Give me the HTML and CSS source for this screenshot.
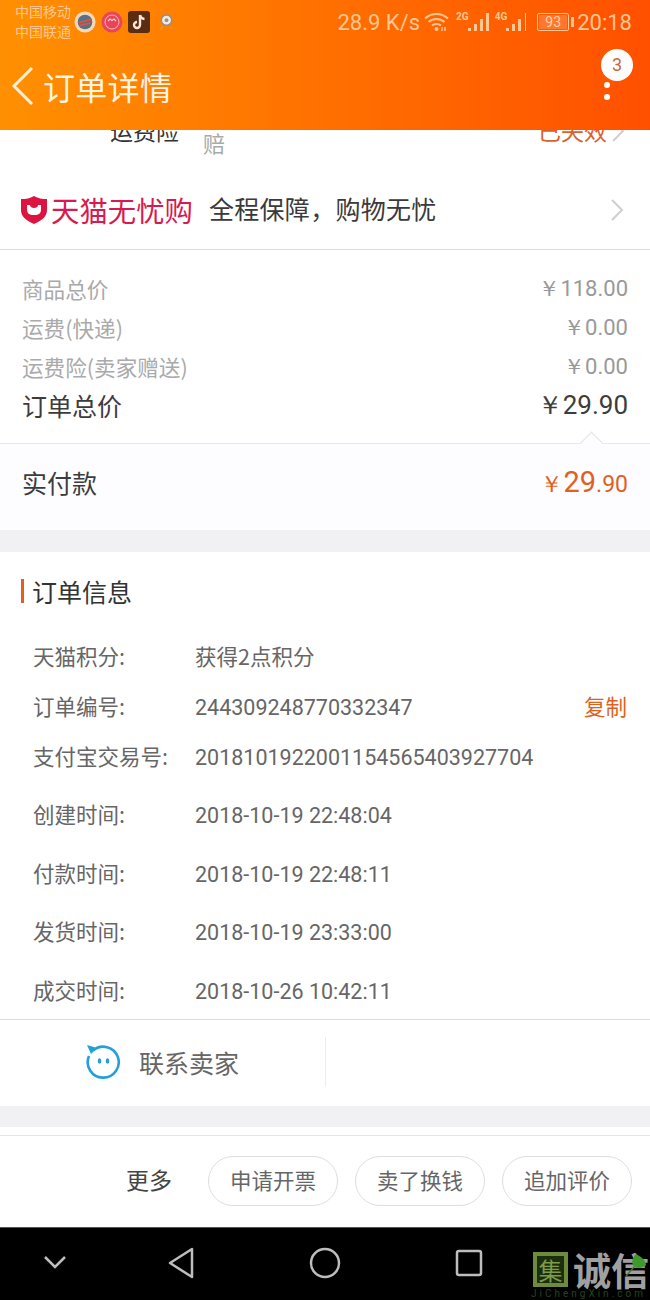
FILE: index.html
```html
<!DOCTYPE html>
<html>
<head>
    <title>订单详情</title>
    <link rel="stylesheet" href="styles.css">
</head>
<body>
<div class="phone">
    <div class="top">
        <div class="status">
            <div class="carrier"><span>中国移动</span><span>中国联通</span></div>
            <div class="apps">
                <svg class="app" width="22" height="22" viewBox="0 0 24 24"><circle cx="12" cy="12" r="11.500" fill="#f3d9b8"/><circle cx="12" cy="12" r="8" fill="#5b6f86"/><path d="M5 13l14-4M6 16l12-3" stroke="#d9553f" stroke-width="2"/></svg>
                <svg class="app" width="22" height="22" viewBox="0 0 22 22"><circle cx="11" cy="11" r="10.500" fill="#e8455a"/><circle cx="11" cy="11" r="7" fill="none" stroke="#f9b7b0" stroke-width="1"/><path d="M7 10l2-2 2 1.500 2-1.500 2 2" fill="none" stroke="#fbd3c8" stroke-width="1.200"/></svg>
                <svg class="app" width="22" height="22" viewBox="0 0 22 22"><rect width="22" height="22" rx="3" fill="#5a2c12"/><path d="M12 4v10a3 3 0 1 1-3-3M12 4c.5 2.500 2 3.800 4.500 4" fill="none" stroke="#fbe6d8" stroke-width="2.400"/></svg>
                <svg class="app app-last" width="15" height="20" viewBox="0 0 16 20"><circle cx="8" cy="8" r="5.500" fill="#f8e8d8" stroke="#8a8f96" stroke-width="1.500"/><circle cx="8" cy="8" r="2" fill="#7d97ad"/><path d="M4 15l-2 3M12 15l2 3" stroke="#c9a27a" stroke-width="1.200"/></svg>
            </div>
            <div class="status-right">
                <span class="speed">28.9 K/s</span>
                <svg class="wifi" width="25" height="20" viewBox="0 0 25 20"><g fill="none" stroke="#ffc792" stroke-width="2"><path d="M1 6.500c6.500-6 16.500-6 23 0"/><path d="M4.500 10c4.500-4 11.500-4 16 0"/><path d="M8 13.500c2.500-2 6.500-2 9 0"/></g><circle cx="12.500" cy="17" r="2" fill="#ffc792"/><path d="M18 15v4M21 15v4" stroke="#ffc792" stroke-width="1.500"/></svg>
                <span class="signal"><i class="net">2G</i>
                    <svg width="22" height="20" viewBox="0 0 22 20" fill="#ffc792"><rect x="0" y="16" width="3" height="3"/><rect x="6" y="12" width="3" height="7"/><rect x="12" y="7" width="3" height="12"/><rect x="18" y="1" width="3" height="18"/></svg>
                </span>
                <span class="signal"><i class="net">4G</i>
                    <svg width="22" height="20" viewBox="0 0 22 20" fill="#ffc792"><rect x="0" y="16" width="3" height="3"/><rect x="6" y="12" width="3" height="7"/><rect x="12" y="7" width="3" height="12"/><rect x="19" y="1" width="1" height="18"/></svg>
                </span>
                <span class="battery"><span class="battery-level">93</span></span><span class="battery-cap"></span>
                <span class="clock">20:18</span>
            </div>
        </div>
        <div class="titlebar">
            <svg class="back" width="24" height="40" viewBox="0 0 24 40"><path d="M21 2L3 20l18 18" fill="none" stroke="#ffeeda" stroke-width="3"/></svg>
            <span class="title">订单详情</span>
            <div class="more">
                <span class="badge">3</span>
                <span class="dot"></span>
                <span class="dot"></span>
            </div>
        </div>
    </div>

    <div class="content">
        <div class="cut-row">
            <span class="cut-name">运费险</span>
            <span class="cut-note">赔</span>
            <span class="cut-state">已失效</span>
            <svg class="chevron" width="14" height="22" viewBox="0 0 14 22"><path d="M2 1l10 10L2 21" fill="none" stroke="#cfcfcf" stroke-width="2"/></svg>
        </div>
        <div class="promise">
            <svg class="shield" width="26" height="28" viewBox="0 0 26 28"><path d="M13 0c4 2.500 8 3 13 3v11c0 7-6 11-13 14C6 25 0 21 0 14V3c5 0 9-.5 13-3z" fill="#dc143f"/><path d="M6 9h14v5a5 5 0 0 1-5 5h-4a5 5 0 0 1-5-5z" fill="#fff"/><path d="M9 9c0 4 8 4 8 0z" fill="#dc143f"/></svg>
            <span class="promise-name">天猫无忧购</span>
            <span class="promise-text">全程保障，购物无忧</span>
            <svg class="chevron" width="14" height="22" viewBox="0 0 14 22"><path d="M2 1l10 10L2 21" fill="none" stroke="#cfcfcf" stroke-width="2"/></svg>
        </div>

        <div class="fees">
            <div class="fee"><span>商品总价</span><span class="price"><i>￥</i>118.00</span></div>
            <div class="fee"><span>运费(快递)</span><span class="price"><i>￥</i>0.00</span></div>
            <div class="fee"><span>运费险(卖家赠送)</span><span class="price"><i>￥</i>0.00</span></div>
            <div class="fee fee-total"><span>订单总价</span><span class="price"><i>￥</i>29.90</span></div>
        </div>

        <div class="paid">
            <span class="arrow"></span>
            <span>实付款</span>
            <span class="paid-price"><i>￥</i><b>29</b>.90</span>
        </div>

        <div class="gap"></div>

        <div class="info">
            <div class="info-title">订单信息</div>
            <div class="info-row"><span class="key">天猫积分:</span><span class="cn">获得2点积分</span></div>
            <div class="info-row"><span class="key">订单编号:</span><span>244309248770332347</span><span class="copy">复制</span></div>
            <div class="info-row"><span class="key">支付宝交易号:</span><span>2018101922001154565403927704</span></div>
            <div class="dates">
                <div class="info-row tall"><span class="key">创建时间:</span><span>2018-10-19 22:48:04</span></div>
                <div class="info-row tall"><span class="key">付款时间:</span><span>2018-10-19 22:48:11</span></div>
                <div class="info-row tall"><span class="key">发货时间:</span><span>2018-10-19 23:33:00</span></div>
                <div class="info-row tall"><span class="key">成交时间:</span><span>2018-10-26 10:42:11</span></div>
            </div>
        </div>

        <div class="contact">
            <div class="contact-seller">
                <svg width="36" height="36" viewBox="0 0 36 36"><path d="M8 6.500A15.500 15.500 0 1 1 4 12" fill="none" stroke="#22a0dc" stroke-width="2.600"/><path d="M2 1l10 3-6 6z" fill="#22a0dc"/><ellipse cx="14.500" cy="17" rx="1.800" ry="2.800" fill="#22a0dc"/><ellipse cx="22.500" cy="17" rx="1.800" ry="2.800" fill="#22a0dc"/></svg>
                <span>联系卖家</span>
            </div>
            <div class="contact-empty"></div>
        </div>

        <div class="gap gap-small"></div>
        <div class="spacer"></div>

        <div class="actions">
            <span class="actions-more">更多</span>
            <span class="pill">申请开票</span>
            <span class="pill">卖了换钱</span>
            <span class="pill">追加评价</span>
        </div>
    </div>

    <div class="nav">
        <div class="nav-btn nav-first">
            <svg width="26" height="18" viewBox="0 0 26 18"><path d="M3 3l10 10L23 3" fill="none" stroke="#bdbdbd" stroke-width="2.500"/></svg>
        </div>
        <div class="nav-btn">
            <svg width="28" height="32" viewBox="0 0 28 32"><path d="M25 2v28L3 16z" fill="none" stroke="#bdbdbd" stroke-width="2.500" stroke-linejoin="round"/></svg>
        </div>
        <div class="nav-btn">
            <svg width="32" height="32" viewBox="0 0 32 32"><circle cx="16" cy="16" r="14" fill="none" stroke="#bdbdbd" stroke-width="2.500"/></svg>
        </div>
        <div class="nav-btn">
            <svg width="28" height="28" viewBox="0 0 28 28"><rect x="2" y="2" width="24" height="24" rx="2" fill="none" stroke="#bdbdbd" stroke-width="2.500"/></svg>
        </div>
        <div class="watermark">
            <div class="wm-main">
                <span class="wm-box">集</span>
                <span class="wm-name">诚信</span>
            </div>
            <span class="wm-url">JiChengXin.com</span>
            <svg class="wm-leaf" width="22" height="28" viewBox="0 0 22 28"><path d="M11 2c6 3 10 7 10 11-3 3-8 4-12 2C6 11 7 6 11 2z" fill="#3f9a2e"/><path d="M9 15L1 24" stroke="#3f7a2e" stroke-width="1.500"/></svg>
        </div>
    </div>
</div>
</body>
</html>
```

FILE: styles.css
```css
* {
    box-sizing: border-box;
}

body {
    margin: 0;
    background-color: #fff;
    font-family: "Noto Sans CJK SC", sans-serif;
    color: #333;
}

i {
    font-style: normal;
}

.phone {
    width: 650px;
    height: 1300px;
    display: flex;
    flex-direction: column;
    overflow: hidden;
}

/* header */

.top {
    height: 130px;
    flex: none;
    background: linear-gradient(90deg, #ff9000, #ff5000);
}

.status {
    height: 44px;
    display: flex;
    align-items: center;
    padding: 0 18px 0 15px;
    color: #ffc792;
}

.carrier {
    display: flex;
    flex-direction: column;
    font-size: 14px;
    line-height: 20px;
    margin-top: -2px;
}

.apps {
    display: flex;
    align-items: center;
    gap: 5px;
    margin-left: 3px;
}

.app-last {
    margin-left: 4px;
}

.status-right {
    margin-left: auto;
    display: flex;
    align-items: center;
    font-family: Roboto, sans-serif;
}

.speed {
    font-size: 22px;
    margin-right: 4px;
}

.wifi {
    margin-right: 7px;
}

.signal {
    display: flex;
    align-items: flex-end;
    margin-right: 5px;
}

.net {
    font-size: 10px;
    line-height: 10px;
    font-weight: bold;
    align-self: flex-start;
    margin-right: -1px;
}

.battery {
    width: 32px;
    height: 18px;
    margin-left: 4px;
    border: 1px solid #ffc792;
    border-radius: 2px;
    padding: 1px;
    display: flex;
}

.battery-level {
    flex: 1;
    background-color: rgba(255, 255, 255, 0.18);
    color: #ffd2a6;
    font-size: 14px;
    line-height: 14px;
    text-align: center;
}

.battery-cap {
    width: 3px;
    height: 10px;
    margin-left: 2px;
    background-color: #ffc792;
}

.clock {
    font-size: 22px;
    margin-left: 3px;
}

.titlebar {
    height: 86px;
    display: flex;
    align-items: center;
    padding: 0 0 2px 11px;
    position: relative;
}

.title {
    margin-left: 8px;
    font-size: 32px;
    letter-spacing: 0.300px;
    color: #fff3e4;
}

.more {
    margin-left: auto;
    margin-right: 40px;
    margin-top: 9px;
    display: flex;
    flex-direction: column;
    align-items: center;
    gap: 6px;
}

.dot {
    width: 6px;
    height: 6px;
    border-radius: 50%;
    background-color: #fff;
}

.badge {
    position: absolute;
    top: 5px;
    right: 17px;
    width: 32px;
    height: 32px;
    border-radius: 50%;
    background-color: #fff;
    color: #c9693a;
    font-family: Roboto, sans-serif;
    font-size: 18px;
    line-height: 32px;
    text-align: center;
}

/* content */

.content {
    height: 1097px;
    flex: none;
    display: flex;
    flex-direction: column;
    background-color: #fff;
}

.cut-row {
    height: 40px;
    position: relative;
    overflow: hidden;
}

.cut-name {
    position: absolute;
    left: 110px;
    top: -14px;
    font-size: 23px;
    line-height: 28px;
}

.cut-note {
    position: absolute;
    left: 203px;
    top: -2px;
    font-size: 22px;
    line-height: 28px;
    color: #aaa;
}

.cut-state {
    position: absolute;
    right: 43px;
    top: -14px;
    font-size: 23px;
    line-height: 28px;
    color: #d8622e;
}

.cut-row .chevron {
    position: absolute;
    right: 25px;
    top: -10px;
}

.promise {
    height: 80px;
    display: flex;
    align-items: center;
    padding: 0 26px 0 21px;
    border-bottom: 1px solid #dcdcdc;
}

.shield {
    flex: none;
}

.promise-name {
    margin-left: 4px;
    font-size: 28.400px;
    color: #d81a50;
    white-space: nowrap;
}

.promise-text {
    margin-left: 16px;
    padding-bottom: 3px;
    font-size: 25px;
    letter-spacing: 0.300px;
    color: #3a3a3a;
    white-space: nowrap;
}

.promise .chevron {
    margin-left: auto;
}

.fees {
    height: 193px;
    padding: 19px 22px 0;
}

.fee {
    height: 39px;
    display: flex;
    justify-content: space-between;
    align-items: center;
    font-size: 21.600px;
    color: #aaa;
}

.fee .price {
    font-family: Roboto, sans-serif;
    font-size: 22px;
    color: #999;
}

.fee-total {
    height: 38px;
    font-size: 25px;
    color: #3c3c3c;
}

.fee-total .price {
    font-size: 26px;
    color: #3c3c3c;
}

.paid {
    height: 87px;
    flex: none;
    position: relative;
    display: flex;
    justify-content: space-between;
    align-items: center;
    padding: 0 22px 11px;
    background-color: #fdfcfe;
    border-top: 1px solid #e8e8e8;
    font-size: 25px;
    color: #3c3c3c;
}

.arrow {
    position: absolute;
    top: -9px;
    left: 583px;
    width: 17px;
    height: 17px;
    background-color: #fdfcfe;
    border-top: 1px solid #e4e4e4;
    border-left: 1px solid #e4e4e4;
    transform: rotate(45deg);
}

.paid-price {
    padding-top: 2px;
    font-family: Roboto, sans-serif;
    font-size: 23px;
    color: #e0601f;
}

.paid-price b {
    font-size: 29px;
    font-weight: 400;
}

.gap {
    height: 22px;
    flex: none;
    background-color: #f1f1f3;
}

.gap-small {
    height: 21px;
}

.info {
    height: 468px;
    flex: none;
    border-bottom: 1px solid #dcdcdc;
    padding-top: 27px;
}

.info-title {
    height: 24px;
    margin: 0 0 29px 21px;
    padding-left: 8px;
    border-left: 3px solid #e0601f;
    font-size: 25px;
    line-height: 24px;
}

.info-row {
    height: 50px;
    display: flex;
    align-items: baseline;
    padding: 8px 23px 0 33px;
    font-size: 21.500px;
    line-height: 32px;
    color: #666;
    font-family: Roboto, "Noto Sans CJK SC", sans-serif;
}

.info-row.tall {
    height: 58.500px;
    padding-top: 12px;
}

.dates {
    padding-top: 4px;
}

.key,
.cn {
    font-family: "Noto Sans CJK SC", sans-serif;
}

.key {
    width: 162px;
    flex: none;
}

.copy {
    margin-left: auto;
    color: #e0601f;
    font-family: "Noto Sans CJK SC", sans-serif;
}

.contact {
    height: 86px;
    flex: none;
    display: flex;
    align-items: center;
}

.contact-seller {
    width: 326px;
    height: 50px;
    margin-bottom: 2px;
    display: flex;
    align-items: center;
    padding-left: 85px;
    border-right: 1px solid #ececec;
    font-size: 25px;
    color: #666;
}

.contact-seller span {
    margin-left: 18px;
}

.spacer {
    height: 8px;
    flex: none;
}

.actions {
    height: 92px;
    flex: none;
    display: flex;
    align-items: center;
    justify-content: flex-end;
    gap: 17px;
    padding: 0 18px 1px 0;
    border-top: 1px solid #e4e4e4;
}

.actions-more {
    font-size: 23px;
    color: #444;
    margin-right: 19px;
    line-height: 30px;
    padding-bottom: 4px;
}

.pill {
    width: 130px;
    height: 50px;
    border: 1px solid #dedede;
    border-radius: 25px;
    font-size: 21.500px;
    line-height: 46px;
    text-align: center;
    color: #666;
}

/* android nav */

.nav {
    height: 73px;
    flex: none;
    position: relative;
    background-color: #000;
    border-top: 1px solid #555;
    display: flex;
    align-items: center;
    padding-bottom: 2px;
}

.nav-btn {
    width: 144px;
    display: flex;
    justify-content: center;
}

.nav-first {
    width: 109px;
}

.watermark {
    position: absolute;
    left: 531px;
    top: 23px;
    width: 119px;
    height: 50px;
    overflow: hidden;
}

.wm-main {
    display: flex;
    align-items: center;
    height: 36px;
    padding-left: 2px;
}

.wm-box {
    width: 35px;
    height: 35px;
    flex: none;
    background-color: #1c2e10;
    border: 4px solid #6d8a3d;
    color: #7d9c46;
    font-size: 24px;
    line-height: 27px;
    text-align: center;
}

.wm-name {
    margin-left: 5px;
    font-size: 38px;
    line-height: 36px;
    font-weight: bold;
    color: #a0a0a0;
    white-space: nowrap;
}

.wm-url {
    display: block;
    margin-top: 1px;
    font-family: Roboto, sans-serif;
    font-size: 10px;
    line-height: 12px;
    letter-spacing: 3px;
    color: #22481a;
    white-space: nowrap;
}

.wm-leaf {
    position: absolute;
    left: 94px;
    top: 1px;
}
```
